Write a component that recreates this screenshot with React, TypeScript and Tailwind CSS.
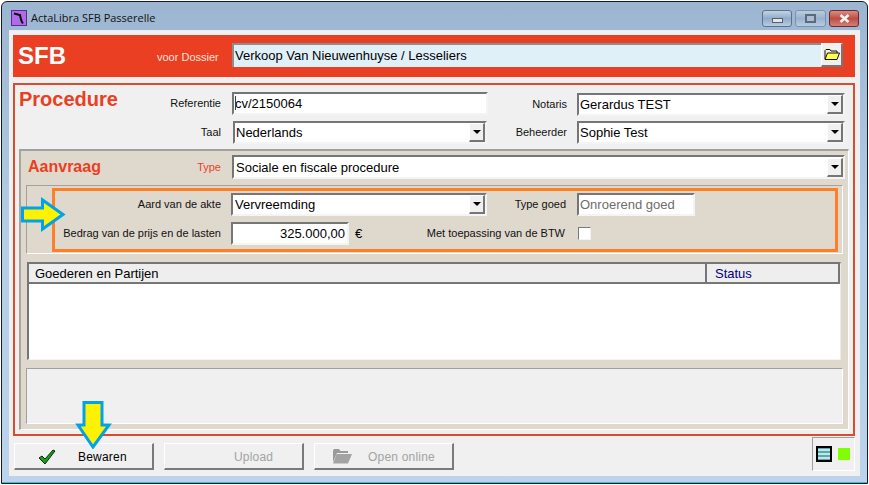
import React from 'react';

const sunken = 'border-2 border-t-[#767676] border-l-[#767676] border-b-[#f4f4f4] border-r-[#f4f4f4] bg-white';

const Caret: React.FC = () => (
  <div className="w-[16px] h-[19px] shrink-0 flex items-center justify-center bg-[#f0f0f0] border-t border-l border-b-2 border-r-2 border-t-white border-l-white border-b-[#767676] border-r-[#767676]">
    <svg width="8" height="4" viewBox="0 0 8 4"><path d="M0 0h8L4 4z" fill="#000" /></svg>
  </div>
);

const Field: React.FC<{ value: string; className: string; select?: boolean; text?: string; cursor?: boolean }> = ({ value, className, select, text = 'text-black pl-[2px]', cursor }) => (
  <div className={`${sunken} ${className} flex items-center justify-between shrink-0 text-[13px] leading-none`}>
    <span className={`${text} relative whitespace-nowrap`}>
      {cursor && <span className="absolute left-[1px] top-[-1px] w-px h-[14px] bg-[#1c3f8f]" />}
      {value}
    </span>
    {select && <Caret />}
  </div>
);

const Label: React.FC<{ children: React.ReactNode; className: string }> = ({ children, className }) => (
  <div className={`${className} shrink-0 text-right text-[11px] leading-none text-[#111]`}>{children}</div>
);

const ActionButton: React.FC<{ label: string; disabled?: boolean; icon?: React.ReactNode; labelClass: string }> = ({ label, disabled, icon, labelClass }) => (
  <div className="relative w-[140px] h-[27px] flex items-center bg-[#f0f0f0] border border-t-white border-l-white border-b-2 border-r-2 border-b-[#7a7a7a] border-r-[#7a7a7a]">
    {icon}
    <span className={`${labelClass} mt-[1px] text-[12px] leading-none tracking-[0.2px] ${disabled ? 'text-[#a3a3a3]' : 'text-black'}`}>{label}</span>
  </div>
);

const ArrowRight: React.FC = () => (
  <svg className="absolute left-[20px] top-[197px]" width="46" height="35" viewBox="0 0 46 35">
    <path d="M2.500 11H22.500V3L43 17.500 22.500 32V24H2.500z" fill="#fff200" stroke="#00a2e8" strokeWidth="3" />
  </svg>
);

const ArrowDown: React.FC = () => (
  <svg className="absolute left-[75px] top-[400px]" width="37" height="49" viewBox="0 0 37 49">
    <path d="M9 2.500H27V25H34L18 47 3 25H9z" fill="#fff200" stroke="#00a2e8" strokeWidth="3" />
  </svg>
);

const App: React.FC = () => {
  return (
    <div className="relative w-[869px] h-[485px] bg-white overflow-hidden font-['Liberation_Sans',sans-serif]">
      <div className="mx-[1px] mt-[1px] w-[867px] h-[483px] rounded-t-[6px] border border-[#1b1b1b] bg-gradient-to-b from-[#9cb6d2] via-[#b4cde8] to-[#bbd3ec] flex flex-col">
        {/* title bar */}
        <div className="h-[28px] shrink-0 flex items-start pt-[8px] pl-[9px] pr-[8px]">
          <svg width="16" height="16" viewBox="0 0 16 16" className="shrink-0">
            <rect width="16" height="16" fill="#b06ce8" />
            <rect x="0.500" y="0.500" width="15" height="15" fill="none" stroke="#5a2a90" />
            <path d="M3 3.500L9 5C9.500 8 10 11 12 13.500" fill="none" stroke="#111" strokeWidth="2" />
            <path d="M7 5L10 4 10 7z" fill="#111" />
          </svg>
          <span className="ml-[4px] mt-[2px] text-[11px] leading-none text-[#111] font-['Open_Sans',sans-serif]">ActaLibra SFB Passerelle</span>
          <div className="ml-auto flex gap-[3px]">
            <div className="w-[30px] h-[17px] rounded-[3px] border border-[#5d7289] bg-gradient-to-b from-[#c3d3e5] via-[#90abc8] to-[#b6cde4] flex items-center justify-center">
              <div className="w-[11px] h-[5px] mt-[3px] bg-[#e6e6e6] border border-[#53606d]" />
            </div>
            <div className="w-[31px] h-[17px] rounded-[3px] border border-[#7d92a9] bg-gradient-to-b from-[#bccee1] via-[#98b2cd] to-[#b6cde4] flex items-center justify-center">
              <div className="w-[11px] h-[9px] border-2 border-[#5c6b7a] bg-[#a9bed4]" />
            </div>
            <div className="w-[30px] h-[17px] rounded-[3px] border border-[#6d2a28] bg-gradient-to-b from-[#d98c84] via-[#bf4b42] to-[#cf8078] flex items-center justify-center">
              <svg width="11" height="9" viewBox="0 0 11 9"><path d="M1.500 1L9.500 8M9.500 1L1.500 8" stroke="#f2f2f2" strokeWidth="2.600" /></svg>
            </div>
          </div>
        </div>

        {/* client area */}
        <div className="ml-[7px] mr-[7px] w-[851px] h-[446px] bg-[#f0f0f0] border-t border-t-[#e6eef5] pl-[4px] pr-[5px] pt-[4px]">
          {/* red header */}
          <div className="h-[42px] bg-[#ea3f23] flex items-center">
            <span className="w-[144px] pl-[5px] text-white font-bold text-[24px] leading-none">SFB</span>
            <span className="w-[62px] text-[11px] leading-none text-[#f8e3da] whitespace-nowrap mt-[2px]">voor Dossier</span>
            <div className="ml-[13px] mb-[2px] w-[611px] h-[24px] border-l-2 border-t-2 border-l-[#8e8e8e] border-t-[#8e8e8e] bg-[#e0f0f8] flex items-center justify-between">
              <span className="pl-[1px] mt-[-2px] text-[13px] leading-none text-black">Verkoop Van Nieuwenhuyse / Lesseliers</span>
              <div className="w-[22px] h-[24px] mt-[-2px] flex items-center justify-center bg-[#f0f0f0] border-t border-l border-b-2 border-r-2 border-t-white border-l-white border-b-[#767676] border-r-[#767676]">
                <svg width="16" height="13" viewBox="0 0 16 13">
                  <path d="M1 11V2.500L2 1.500H6L7 3H13V5" fill="#f3f3c8" stroke="#111" />
                  <path d="M1 11.500L3.500 5H15.500L13 11.500z" fill="#ffff50" stroke="#111" />
                </svg>
              </div>
            </div>
          </div>

          {/* procedure panel */}
          <div className="mt-[6px] h-[353px] border-2 border-[#d94c30] bg-[#f0f0f0] px-[4px] flex flex-col">
            <div className="h-[24px] mt-[7px] flex items-center shrink-0">
              <span className="w-[115px] shrink-0 text-[20px] font-bold leading-none text-[#ea3f23] mt-[-11px]">Procedure</span>
              <Label className="w-[87px] mt-[-2px]">Referentie</Label>
              <Field value="cv/2150064" cursor className="ml-[11px] w-[256px] h-[23px] mt-[-1px]" text="text-black pl-[1px]" />
              <Label className="w-[79px]">Notaris</Label>
              <Field value="Gerardus TEST" select text="text-black pl-[1px]" className="ml-[10px] w-[268px] h-[23px]" />
            </div>
            <div className="h-[24px] mt-[4px] flex items-center shrink-0">
              <Label className="w-[202px]">Taal</Label>
              <Field value="Nederlands" select text="text-black pl-[1px]" className="ml-[12px] w-[254px] h-[23px]" />
              <Label className="w-[80px]">Beheerder</Label>
              <Field value="Sophie Test" select text="text-black pl-[1px]" className="ml-[10px] w-[268px] h-[23px]" />
            </div>

            {/* aanvraag panel */}
            <div className="mt-[5px] h-[281px] w-[830px] bg-[#dfd8cc] border-t-2 border-l-2 border-r border-b border-t-[#a0a0a0] border-l-[#a9a59c] border-r-white border-b-white pl-[5px] flex flex-col">
              <div className="h-[24px] mt-[4px] flex items-center shrink-0">
                <span className="w-[107px] pl-[2px] shrink-0 text-[16px] font-bold leading-none text-[#ea3f23]">Aanvraag</span>
                <Label className="w-[88px] !text-[#ea3f23]">Type</Label>
                <Field value="Sociale en fiscale procedure" select className="ml-[11px] w-[613px] h-[24px]" />
              </div>

              {/* group with the orange highlight */}
              <div className="mt-[6px] h-[69px] w-[817px] border border-[#a5a198] border-r-white border-b-white pl-[25px] pt-[2px] shrink-0">
                <div className="h-[64px] w-[786px] border-[3px] border-[#ff7f27] flex flex-col pt-[2px] shrink-0">
                  <div className="h-[23px] flex items-center">
                    <Label className="w-[166px]">Aard van de akte</Label>
                    <Field value="Vervreemding" select className="ml-[10px] w-[256px] h-[23px]" />
                    <Label className="w-[79px]">Type goed</Label>
                    <Field value="Onroerend goed" text="text-[#6d6d6d] pl-[1px]" className="ml-[11px] w-[118px] h-[23px]" />
                  </div>
                  <div className="h-[23px] mt-[6px] flex items-center">
                    <Label className="w-[166px] whitespace-nowrap">Bedrag van de prijs en de lasten</Label>
                    <div className={`${sunken} ml-[10px] w-[118px] h-[23px] flex items-center justify-end pr-[2px] text-[13px] leading-none text-black`}>325.000,00</div>
                    <span className="ml-[6px] w-[10px] text-[13px] leading-none text-black">€</span>
                    <Label className="w-[200px] whitespace-nowrap">Met toepassing van de BTW</Label>
                    <div className="ml-[13px] w-[13px] h-[13px] bg-white border border-t-[#7a7a7a] border-l-[#7a7a7a] border-b-[#f4f4f4] border-r-[#f4f4f4]" />
                  </div>
                </div>
              </div>

              {/* grid */}
              <div className="mt-[8px] ml-[1px] h-[98px] w-[814px] border-l-2 border-t-2 border-l-[#767676] border-t-[#767676] border-r border-b border-r-[#ececec] border-b-[#f4f4f4] bg-white flex flex-col shrink-0">
                <div className="h-[20px] flex bg-[#eeeeee] border-b-2 border-[#767676] shrink-0 text-[13px] leading-none">
                  <div className="w-[678px] pl-[6px] border-r-2 border-r-[#767676] flex items-center text-black">Goederen en Partijen</div>
                  <div className="flex-1 pl-[8px] border-r-2 border-r-[#767676] flex items-center text-[#000080]">Status</div>
                </div>
              </div>

              {/* empty footer box */}
              <div className="mt-[8px] h-[56px] w-[817px] bg-[#f0f0f0] border-t border-l border-t-[#a0a0a0] border-l-[#a0a0a0] border-r border-r-white border-b border-b-white shrink-0" />
            </div>
          </div>

          {/* bottom buttons */}
          <div className="mt-[1px] flex items-start">
            <div className="pt-[6px] flex gap-[10px] pl-[1px]">
              <ActionButton
                label="Bewaren"
                labelClass="ml-[63px]"
                icon={
                  <svg className="absolute left-[23px] top-[5px]" width="18" height="16" viewBox="0 0 18 16">
                    <path d="M1 9L4 7 7 10 15 1 17 2 7 15z" fill="#1c9a1c" stroke="#0c2c0c" strokeWidth="1" />
                  </svg>
                }
              />
              <ActionButton label="Upload" disabled labelClass="ml-[69px]" />
              <ActionButton
                label="Open online"
                disabled
                labelClass="ml-[53px]"
                icon={
                  <svg className="absolute left-[18px] top-[5px]" width="19" height="15" viewBox="0 0 19 15">
                    <path d="M0 13V1.500L1 0H6L7.500 2H15V4H4z" fill="#9a9a9a" />
                    <path d="M0 14.500L3.500 5H19L15 14.500z" fill="#a3a3a3" />
                  </svg>
                }
              />
            </div>
            <div className="ml-auto w-[43px] h-[34px] border-t border-l border-t-[#a0a0a0] border-l-[#a0a0a0] border-r border-b border-r-white border-b-white flex items-center pl-[3px]">
              <div className="w-[16px] h-[16px] border-2 border-black bg-[repeating-linear-gradient(180deg,#1a8f98_0px,#ffffff_2px,#1a8f98_4px)]" />
              <div className="ml-[6px] w-[12px] h-[12px] bg-[#80ff00]" />
            </div>
          </div>
        </div>
        <div className="mt-auto h-px bg-[#29c5e6]" />
      </div>

      <ArrowRight />
      <ArrowDown />
    </div>
  );
};

export default App;
